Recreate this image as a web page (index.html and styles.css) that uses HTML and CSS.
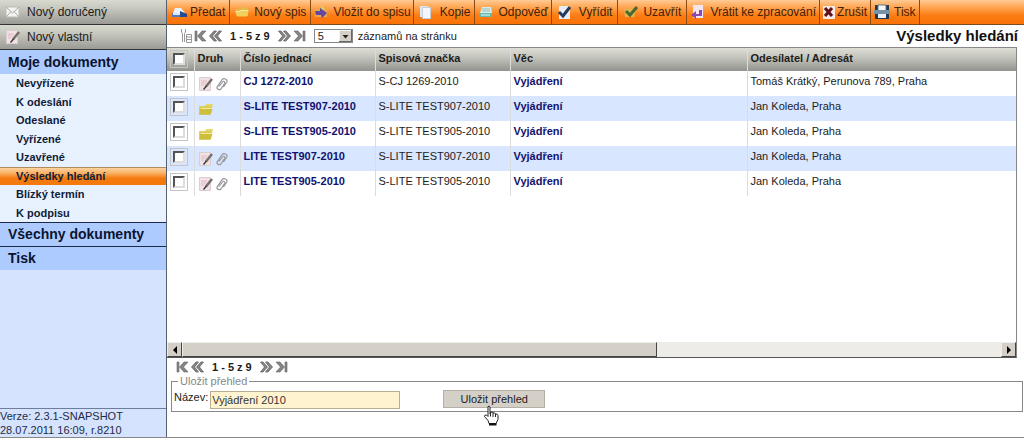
FILE: index.html
```html
<!DOCTYPE html>
<html lang="cs">
<head>
<meta charset="utf-8">
<title>Výsledky hledání</title>
<link rel="stylesheet" href="styles.css">
</head>
<body>
<svg class="defs" aria-hidden="true">
  <defs>
    <linearGradient id="folderFill" x1="0" y1="0" x2="0" y2="1"><stop offset="0" stop-color="#e9dc6c"/><stop offset="1" stop-color="#b9a92c"/></linearGradient>
    <symbol id="note" viewBox="0 0 16 16"><path d="M1.500 1.500h11v13h-11z" fill="#f3e2e5" stroke="#d8cdd0"/><path d="M3 5h6M3 7h5M3 9h3" stroke="#dbb0b8" stroke-width=".8"/><path d="M14 3L8 10.500" stroke="#77706b" stroke-width="2.600"/><path d="M8.500 10L5.500 13.500" stroke="#333" stroke-width="1.300"/></symbol>
    <symbol id="clip" viewBox="0 0 16 16"><path d="M5 10.500L8.500 6c1-1.400 3-.2 2.200 1.300L7 12.800c-1.300 1.900-4.900.4-3.800-2L8 3.800c1.600-2.400 6-.6 4.800 2.200L9.500 11" fill="none" stroke="#999" stroke-width="1.200"/></symbol>
    <symbol id="folder" viewBox="0 0 16 16"><path d="M1 5h6l1.500-2H15l-1 4-1.500 6.500H1.500z" fill="url(#folderFill)"/><path d="M1 13.500L3 8h11.500l-2 5.500z" fill="#cdbf3c"/><path d="M3 7.500h11" stroke="#f2eb9d"/></symbol>
    <symbol id="openfolder" viewBox="0 0 16 16"><path d="M1 5h5l2-2h6v9H3z" fill="#e6b848"/><path d="M1 7h4l2-1h8l-2 6.500H3z" fill="#f0cf5c"/><path d="M2 7.500h3l2-1h7" fill="none" stroke="#f8e79c"/></symbol>
    <symbol id="first" viewBox="0 0 13 12"><path d="M1 1h2v10H1zM8 1L3.500 6 8 11h4L7.500 6 12 1z" fill="#858585" stroke="#666" stroke-width=".6"/></symbol>
    <symbol id="prev" viewBox="0 0 13 12"><path d="M5 1L.5 6 5 11h2.500L3.500 6l4-5zM10 1L5.500 6l4.500 5h2.500l-4-5 4-5z" fill="#858585" stroke="#666" stroke-width=".8"/></symbol>
  </defs>
</svg>
<div class="app">
  <aside class="sidebar">
    <button class="create"><svg class="icon" viewBox="0 0 16 16"><path d="M1 3h13v10H1z" fill="#f3f3ef" stroke="#bdbdb6"/><path d="M1 3l6.500 6L14 3M1 13l5-5.500M14 13L9 7.500" fill="none" stroke="#aaa"/></svg><span>Nový doručený</span></button>
    <button class="create"><svg class="icon"><use href="#note"/></svg><span>Nový vlastní</span></button>
    <nav class="menu">
      <a class="group" href="#">Moje dokumenty</a>
      <ul class="items">
        <li><a class="item" href="#">Nevyřízené</a></li>
        <li><a class="item" href="#">K odeslání</a></li>
        <li><a class="item" href="#">Odeslané</a></li>
        <li><a class="item" href="#">Vyřízené</a></li>
        <li><a class="item" href="#">Uzavřené</a></li>
        <li><a class="item active" href="#">Výsledky hledání</a></li>
        <li><a class="item" href="#">Blízký termín</a></li>
        <li><a class="item" href="#">K podpisu</a></li>
      </ul>
      <a class="group ruled" href="#">Všechny dokumenty</a>
      <a class="group ruled" href="#">Tisk</a>
    </nav>
    <div class="version">Verze: 2.3.1-SNAPSHOT<br>28.07.2011 16:09, r.8210</div>
  </aside>
  <main class="content">
    <div class="toolbar">
      <button class="tool"><svg class="icon" viewBox="0 0 16 16"><path d="M3 4h6l4 5H1z" fill="#e9f2ff"/><path d="M0 9h14l1 4H0z" fill="#5279c4"/><path d="M8 7l7 3v3H8z" fill="#294a91"/><path d="M1 9h7v2H1z" fill="#dfe9fa"/></svg><span>Předat</span></button>
      <button class="tool wide"><svg class="icon"><use href="#openfolder"/></svg><span>Nový spis</span></button>
      <button class="tool wide snug"><svg class="icon" viewBox="0 0 16 16"><path d="M1 5h6l1-2h6v10H2z" fill="#e9a850"/><path d="M8 1l4 4-3 1z" fill="#ded35c"/><path d="M2 7h5V4l7 5-5 5-1-3H3z" fill="#63469d"/></svg><span>Vložit do spisu</span></button>
      <button class="tool roomy"><svg class="icon" viewBox="0 0 16 16"><path d="M2 2h8v11H2z" fill="#dfe5ed"/><path d="M4.500 3.500h8v11h-8z" fill="#f5f7fb" stroke="#c8ced9"/></svg><span>Kopie</span></button>
      <button class="tool wide tight"><svg class="icon" viewBox="0 0 16 16"><path d="M4 3h9l1 6H2z" fill="#d9eee8"/><path d="M1 9h13v4H1z" fill="#66b8ab"/><path d="M4 5h8M4 7h8" stroke="#91beb8"/><path d="M3 11h9" stroke="#dff"/></svg><span>Odpověď</span></button>
      <button class="tool roomy spread"><svg class="icon" viewBox="0 0 16 16"><path d="M2 2h11v13H2z" fill="#e8edf5"/><path d="M2 8l4 4 7-9" fill="none" stroke="#263a5c" stroke-width="3"/></svg><span>Vyřídit</span></button>
      <button class="tool wide spread"><svg class="icon" viewBox="0 0 16 16"><path d="M1 5h12l-2 8H2z" fill="#dcb653"/><path d="M3 7l4 4 7-8" fill="none" stroke="#47692e" stroke-width="3"/></svg><span>Uzavřít</span></button>
      <button class="tool wide tight"><svg class="icon" viewBox="0 0 16 16"><path d="M3 1h10v13H3z" fill="#f2e5ed"/><path d="M1 11l5-4v3h3V6h3v6H6v3z" fill="#8b47b5"/></svg><span>Vrátit ke zpracování</span></button>
      <button class="tool tight"><svg class="icon narrow" viewBox="0 0 12 16"><path d="M0 2h12v13H0z" fill="#f8e9e5"/><path d="M2 4l7 8M9 4l-7 8" stroke="#5c1218" stroke-width="3"/></svg><span>Zrušit</span></button>
      <button class="tool wide tight"><svg class="icon" viewBox="0 0 16 16"><path d="M1 1h3v5H1zM12 1h3v5h-3zM1 9h14v6H1z" fill="#26384a"/><path d="M4 1h8v6H4z" fill="#f4f8fc" stroke="#617486"/><path d="M0 6h16v4H0z" fill="#7893a7"/><path d="M4 10h8v4H4z" fill="#e9f2fa"/></svg><span>Tisk</span></button>
    </div>
    <header class="listbar">
      <div class="pager">
        <svg class="wrench" viewBox="0 0 12 14"><path d="M1.500 0v3l1 1.500V13M5.500 0v3l-1 1.500V13M6.500 5.500h5v8h-5zM6 8h5M6 10.500h5" fill="none" stroke="#999"/></svg>
        <svg class="arrow"><use href="#first"/></svg><svg class="arrow"><use href="#prev"/></svg>
        <b class="range">1 - 5 z 9</b>
        <svg class="arrow flip"><use href="#prev"/></svg><svg class="arrow flip"><use href="#first"/></svg>
        <span class="selectbox"><select class="count" id="count"><option>5</option></select><svg class="drop" viewBox="0 0 13 12"><path d="M0 0h13v12H0z" fill="#d4d0c8"/><path d="M.5 12V.5H13" fill="none" stroke="#f5f5f5"/><path d="M12.500 0v11.500H0" fill="none" stroke="#666"/><path d="M3.500 5h6l-3 3.500z" fill="#222"/></svg></span>
        <label for="count">záznamů na stránku</label>
      </div>
      <h1 class="title">Výsledky hledání</h1>
    </header>
    <section class="list">
      <table class="grid">
        <colgroup><col class="c-check"><col class="c-kind"><col class="c-num"><col class="c-mark"><col class="c-subject"><col></colgroup>
        <thead><tr><th><input class="check" type="checkbox" aria-label="Vybrat vše"></th><th>Druh</th><th>Číslo jednací</th><th>Spisová značka</th><th>Věc</th><th>Odesílatel / Adresát</th></tr></thead>
        <tbody>
          <tr><td><input class="check" type="checkbox" aria-label="CJ 1272-2010"></td><td><span class="kinds"><svg class="icon"><use href="#note"/></svg><svg class="icon"><use href="#clip"/></svg></span></td><td><a class="link" href="#">CJ 1272-2010</a></td><td>S-CJ 1269-2010</td><td><a class="link" href="#">Vyjádření</a></td><td>Tomáš Krátký, Perunova 789, Praha</td></tr>
          <tr><td><input class="check" type="checkbox" aria-label="S-LITE TEST907-2010"></td><td><span class="kinds"><svg class="icon"><use href="#folder"/></svg></span></td><td><a class="link" href="#">S-LITE TEST907-2010</a></td><td>S-LITE TEST907-2010</td><td><a class="link" href="#">Vyjádření</a></td><td>Jan Koleda, Praha</td></tr>
          <tr><td><input class="check" type="checkbox" aria-label="S-LITE TEST905-2010"></td><td><span class="kinds"><svg class="icon"><use href="#folder"/></svg></span></td><td><a class="link" href="#">S-LITE TEST905-2010</a></td><td>S-LITE TEST905-2010</td><td><a class="link" href="#">Vyjádření</a></td><td>Jan Koleda, Praha</td></tr>
          <tr><td><input class="check" type="checkbox" aria-label="LITE TEST907-2010"></td><td><span class="kinds"><svg class="icon"><use href="#note"/></svg><svg class="icon"><use href="#clip"/></svg></span></td><td><a class="link" href="#">LITE TEST907-2010</a></td><td>S-LITE TEST907-2010</td><td><a class="link" href="#">Vyjádření</a></td><td>Jan Koleda, Praha</td></tr>
          <tr><td><input class="check" type="checkbox" aria-label="LITE TEST905-2010"></td><td><span class="kinds"><svg class="icon"><use href="#note"/></svg><svg class="icon"><use href="#clip"/></svg></span></td><td><a class="link" href="#">LITE TEST905-2010</a></td><td>S-LITE TEST905-2010</td><td><a class="link" href="#">Vyjádření</a></td><td>Jan Koleda, Praha</td></tr>
        </tbody>
      </table>
      <div class="scroll">
        <button class="step" aria-label="Doleva"><svg class="tri" viewBox="0 0 4 8"><path d="M4 0v8L0 4z"/></svg></button>
        <div class="track"><div class="thumb"></div></div>
        <button class="step" aria-label="Doprava"><svg class="tri" viewBox="0 0 4 8"><path d="M0 0v8l4-4z"/></svg></button>
      </div>
    </section>
    <div class="pager lower">
      <svg class="arrow"><use href="#first"/></svg><svg class="arrow"><use href="#prev"/></svg>
      <b class="range">1 - 5 z 9</b>
      <svg class="arrow flip"><use href="#prev"/></svg><svg class="arrow flip"><use href="#first"/></svg>
    </div>
    <form>
      <fieldset class="save">
        <legend class="legend">Uložit přehled</legend>
        <div class="fields">
          <label for="name">Název:</label>
          <input class="name" id="name" type="text" value="Vyjádření 2010">
          <span class="submitbox">
            <button class="submit" type="button">Uložit přehled</button>
            <svg class="hand" viewBox="0 0 17 22"><path d="M5 1.500q1.500-1 2 .5v7l1-2q2-.5 2 1 2-.7 2.500 1 2-.5 2.500 1.500v4l-2 4H6l-1-3-3.500-4q0-2 2-1.500L5 11.500z" fill="#fff" stroke="#222"/><path d="M7.500 7.500v4M10 8v4M12.500 9v3" stroke="#222"/><path d="M6 18h7.500v2.500H6z" fill="#111"/></svg>
          </span>
        </div>
      </fieldset>
    </form>
  </main>
</div>
</body>
</html>
```
FILE: styles.css
```css
* { box-sizing: border-box; }
body {
  margin: 0;
  font: 11px/16px "Liberation Sans", Arial, sans-serif;
  color: #1c1c1c;
  background: #fff;
}
a { color: inherit; text-decoration: none; }
button { font: inherit; color: inherit; margin: 0; }
.defs { position: absolute; width: 0; height: 0; }
.app {
  display: flex;
  min-height: calc(100vh - 3px);
  border-bottom: 1px solid #888;
}
.icon { width: 16px; height: 16px; flex: none; }
.narrow { width: 12px; }

.sidebar {
  display: flex;
  flex-direction: column;
  flex: 0 0 167px;
  background: #d6e3ff;
  border-right: 1px solid #555f70;
}
.create {
  display: flex;
  align-items: center;
  gap: 6px;
  height: 25px;
  padding: 0 5px;
  font-size: 12px;
  border: 0;
  border-bottom: 1px solid #333;
  background: linear-gradient(#d9dacf, #c3c4bb 40%, #9b9b96);
}
.menu { flex: 1; }
.group {
  display: block;
  padding: 4px 8px;
  font-size: 14px;
  font-weight: bold;
  color: #0b1430;
  background: #adcbff;
}
.ruled { padding-top: 3px; border-top: 1px solid #1c2a48; }
.items {
  display: grid;
  grid-auto-rows: 1fr;
  height: 148px;
  margin: 0;
  padding: 0;
  list-style: none;
  background: #e8f2ff;
}
.item {
  display: block;
  height: 100%;
  padding: 0 16px;
  font-weight: bold;
  line-height: 17px;
  border-top: 1px solid transparent;
  color: #101c38;
}
.active {
  border-top-color: #b08c5e;
  background: linear-gradient(#fbd3a0, #f9b266 30%, #f57a0e 60%, #f57a0e);
}
.version { border-top: 1px solid #6d7d9c; line-height: 14px; color: #222c44; }

.content { flex: 1; min-width: 0; display: flex; flex-direction: column; }
.toolbar {
  display: flex;
  height: 25px;
  padding-left: 1px;
  border-bottom: 1px solid #7c4a1c;
  background: linear-gradient(#ffcb95, #ffa552 30%, #fb7c12 65%, #fa7208);
}
.tool {
  display: flex;
  align-items: center;
  gap: 2px;
  padding: 0 4px;
  font-size: 12px;
  border: 0;
  border-right: 1px solid #8a4c14;
  background: none;
  color: #42210a;
  white-space: nowrap;
}
.wide { gap: 4px; }
.roomy { gap: 6px; }
.snug { padding: 0 2px; }
.tight { padding: 0 3px; }
.spread { padding: 0 5px; }

.listbar { display: flex; justify-content: space-between; align-items: center; height: 22px; padding: 0 6px 0 13px; }
.pager { display: flex; align-items: center; gap: 2px; }
.wrench { width: 12px; height: 14px; }
.arrow { width: 13px; height: 12px; }
.flip { transform: scaleX(-1); }
.range { margin: 0 6px; }
.selectbox { position: relative; display: flex; margin: 0 3px 0 6px; }
.count {
  appearance: none;
  width: 39px;
  height: 14px;
  padding: 0 3px;
  font: 11px/12px "Liberation Sans", Arial, sans-serif;
  color: #1c1c1c;
  border: 1px solid #888;
  border-radius: 0;
  background: #fff;
}
.drop { position: absolute; right: 1px; top: 1px; width: 13px; height: 12px; pointer-events: none; }
.title { margin: 0; font-size: 15px; line-height: 20px; color: #111; }

.list {
  flex: 1;
  display: flex;
  flex-direction: column;
  justify-content: space-between;
  margin-right: 7px;
  border: 1px solid #888;
  border-left: 0;
  border-bottom-color: #555;
}
.grid { width: 100%; border-collapse: collapse; table-layout: fixed; }
.c-check { width: 27px; }
.c-kind { width: 46px; }
.c-num { width: 135px; }
.c-mark { width: 135px; }
.c-subject { width: 237px; }
.grid th, .grid td { padding: 2px 3px; vertical-align: top; text-align: left; border-right: 1px solid #dcdcdc; }
.grid th { height: 23px; background: linear-gradient(#deded5, #c0c1b9 45%, #92928e); }
.grid td { height: 25px; }
.grid th:first-child, .grid td:first-child { padding: 5px 6px 0; }
.grid th:last-child, .grid td:last-child { border-right: 0; }
.grid tbody tr:nth-child(even) { background: #d9e6ff; }
.link { font-weight: bold; color: #12126e; }
.kinds { display: flex; padding-top: 3px; }
.check {
  display: block;
  appearance: none;
  width: 12px;
  height: 12px;
  margin: 0;
  border: 2px solid;
  border-color: #555 #ddd #ddd #555;
  background: #fff;
  outline: 1px solid #c4c4c4;
  outline-offset: 2px;
}

.scroll { display: flex; height: 15px; }
.step {
  display: flex;
  align-items: center;
  justify-content: center;
  width: 15px;
  padding: 0;
  border: 1px solid;
  border-color: #eee #444 #444 #eee;
  background: #d4d0c8;
}
.tri { width: 4px; height: 8px; }
.track { flex: 1; background: #eeece8; }
.thumb { width: 58%; height: 100%; background: #d4d0c8; border: 1px solid; border-color: #eee #444 #444 #eee; }

.lower { height: 17px; padding-left: 9px; }
.save { margin: 0 1px 25px 4px; padding: 0 2px; border: 1px solid #888; min-width: 0; }
.legend { margin-left: 4px; padding: 0 2px; line-height: 12px; color: #888; }
.fields { display: flex; height: 24px; padding-top: 2px; }
.name { width: 190px; height: 18px; margin: 2px 43px 0 2px; padding: 0 1px; font: inherit; color: #333; border: 1px solid #b9ae94; background: #fff4cf; }
.submitbox { position: relative; margin-top: 1px; }
.submit { width: 102px; height: 18px; padding: 0; border: 1px solid #b5b0a6; background: #d4d0c8; }
.hand { position: absolute; left: 40px; top: 15px; width: 17px; height: 22px; }
```
